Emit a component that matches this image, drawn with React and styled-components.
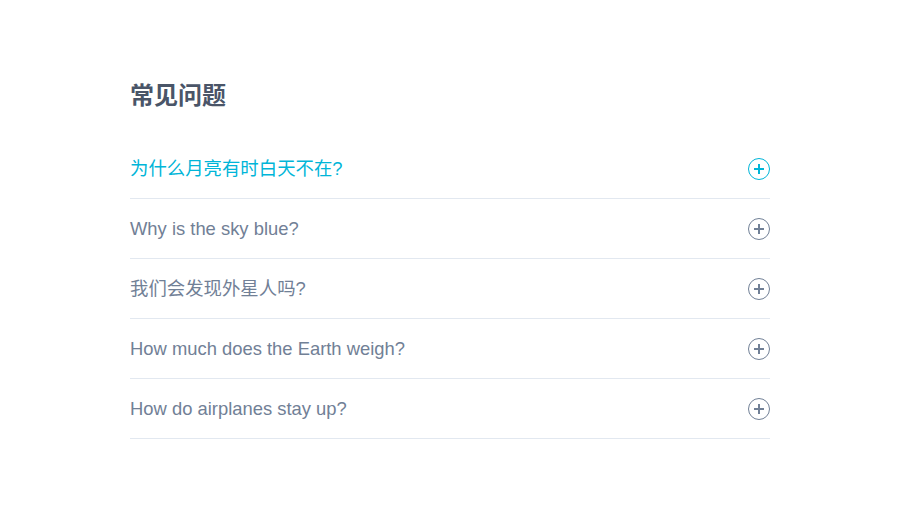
import React, { useState } from "react";
import styled, { createGlobalStyle } from "styled-components";

const GlobalStyle = createGlobalStyle`
  html, body {
    margin: 0;
    padding: 0;
    background: #ffffff;
  }
  body {
    font-family: "Liberation Sans", Arial, "Noto Sans CJK SC", sans-serif;
  }
`;

const faqs = [
  "为什么月亮有时白天不在?",
  "Why is the sky blue?",
  "我们会发现外星人吗?",
  "How much does the Earth weigh?",
  "How do airplanes stay up?",
];

const PlusIcon = ({ color }) => (
  <svg width="22" height="22" viewBox="0 0 22 22" fill="none">
    <circle cx="11" cy="11" r="10.5" stroke={color} strokeWidth="1" />
    <path d="M11 6v10M6 11h10" stroke={color} strokeWidth="2" />
  </svg>
);

export default function App() {
  const [active] = useState(0);

  return (
    <>
      <GlobalStyle />
      <Page>
        <Section>
          <Title>常见问题</Title>
          <List>
            {faqs.map((q, i) => (
              <Item key={q}>
                <Question $active={i === active}>
                  <span>{q}</span>
                  <PlusIcon color={i === active ? "#00b5d8" : "#718096"} />
                </Question>
              </Item>
            ))}
          </List>
        </Section>
      </Page>
    </>
  );
}

const Page = styled.div`
  width: 900px;
  height: 519px;
  display: flex;
  justify-content: center;
`;

const Section = styled.section`
  width: 640px;
  padding-top: 78px;
`;

const Title = styled.h2`
  margin: 0 0 25px;
  font-size: 24px;
  line-height: 36px;
  font-weight: 700;
  color: #4a5568;
`;

const List = styled.div`
  display: flex;
  flex-direction: column;
`;

const Item = styled.div`
  border-bottom: 1px solid #e2e8f0;
`;

const Question = styled.button`
  width: 100%;
  height: 59px;
  display: flex;
  align-items: center;
  justify-content: space-between;
  padding: 0;
  border: none;
  background: none;
  font-family: inherit;
  font-size: 18.4px;
  line-height: 27px;
  text-align: left;
  cursor: pointer;
  color: ${(p) => (p.$active ? "#00b5d8" : "#718096")};

  svg {
    flex-shrink: 0;
  }
`;
